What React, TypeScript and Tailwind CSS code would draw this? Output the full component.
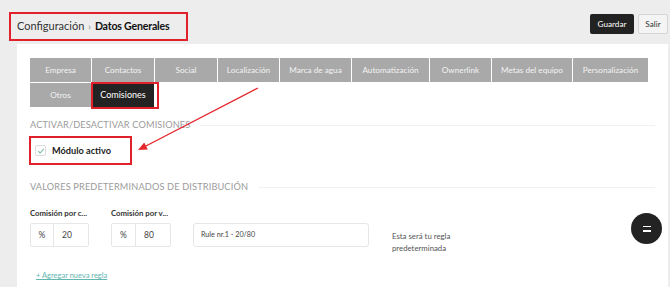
import React from "react";

const tabsRow1: { label: string; w: string }[] = [
  { label: "Empresa", w: "w-[61px]" },
  { label: "Contactos", w: "w-[62px]" },
  { label: "Social", w: "w-[62px]" },
  { label: "Localización", w: "w-[61px]" },
  { label: "Marca de agua", w: "w-[71px]" },
  { label: "Automatización", w: "w-[77px]" },
  { label: "Ownerlink", w: "w-[61px]" },
  { label: "Metas del equipo", w: "w-[80px]" },
  { label: "Personalización", w: "w-[75px]" },
];

function Tab({ label, w, active }: { label: string; w: string; active?: boolean }) {
  return (
    <div
      className={`${w} h-[24px] flex items-center justify-center text-[8.2px] whitespace-nowrap ${
        active ? "bg-[#232323] text-white text-[9px]" : "bg-[#a9a9a9] text-[#f3f3f3]"
      }`}
    >
      {label}
    </div>
  );
}

function SectionHeading({ children }: { children: React.ReactNode }) {
  return (
    <div className="flex items-center gap-[10px] h-[14px] pr-[13px]">
      <span className="text-[9.2px] tracking-[0.15px] text-[#9b9b9b] whitespace-nowrap">{children}</span>
      <div className="flex-1 h-px bg-[#f1f1f1]" />
    </div>
  );
}

export default function App() {
  return (
    <div
      className="relative w-[670px] h-[287px] overflow-hidden bg-[#ededed] flex flex-col"
      style={{ fontFamily: "Lato, 'Noto Sans', sans-serif" }}
    >
      {/* Header */}
      <div className="h-[44px] flex items-center justify-between pl-[9px] pr-[2px] shrink-0">
        <div className="h-[29px] w-[179px] border-2 border-[#e0202a] flex items-center pl-[6px] mt-[9px] whitespace-nowrap">
          <span className="text-[11px] text-[#333]">Configuración</span>
          <span className="text-[9px] text-[#777] mx-[4px]">›</span>
          <span className="text-[10.6px] font-bold text-[#111] tracking-[-0.2px]">Datos Generales</span>
        </div>
        <div className="flex items-center gap-[4px] mt-[4px]">
          <div className="w-[44px] h-[20px] rounded-[2px] bg-[#222] text-white text-[8.2px] flex items-center justify-center">
            Guardar
          </div>
          <div className="w-[30px] h-[20px] rounded-[2px] bg-[#f4f4f4] border border-[#d6d6d6] text-[#333] text-[8.2px] flex items-center justify-center">
            Salir
          </div>
        </div>
      </div>

      {/* Panel */}
      <div className="flex-1 ml-[17px] mr-[2px] bg-white pl-[13px] pt-[14px] flex flex-col">
        <div className="flex flex-wrap gap-px w-[620px]">
          {tabsRow1.map((t) => (
            <Tab key={t.label} label={t.label} w={t.w} />
          ))}
          <Tab label="Otros" w="w-[61px]" />
          <div className="relative">
            <Tab label="Comisiones" w="w-[62px]" active />
            <div className="absolute left-[-1px] top-[-1px] w-[68px] h-[27px] border-2 border-[#e0202a]" />
          </div>
        </div>

        <div className="mt-[11px]">
          <SectionHeading>ACTIVAR/DESACTIVAR COMISIONES</SectionHeading>
        </div>

        <div className="mt-[4px] ml-[-1px] w-[103px] h-[29px] border-2 border-[#e0202a] flex items-center pl-[4px] gap-[6px]">
          <div className="w-[11px] h-[11px] border border-[#dcdcdc] rounded-[2px] flex items-center justify-center">
            <svg width="8" height="8" viewBox="0 0 8 8">
              <path d="M1.2 4.2 L3.1 6 L6.8 1.8" fill="none" stroke="#7fb8b0" strokeWidth="1.1" />
            </svg>
          </div>
          <span className="text-[9.2px] font-bold text-[#222]">Módulo activo</span>
        </div>

        <div className="mt-[15px]">
          <SectionHeading>VALORES PREDETERMINADOS DE DISTRIBUCIÓN</SectionHeading>
        </div>

        <div className="mt-[13px] flex items-start">
          <div className="flex flex-col w-[81px]">
            <span className="h-[12px] leading-[12px] text-[7.8px] font-bold text-[#333] whitespace-nowrap">Comisión por c...</span>
            <div className="mt-[4px] w-[59px] h-[24px] border border-[#e6e6e6] rounded-[2px] flex text-[8.5px] text-[#444]">
              <div className="w-[23px] border-r border-[#e6e6e6] flex items-center justify-center">%</div>
              <div className="flex items-center pl-[8px]">20</div>
            </div>
          </div>
          <div className="flex flex-col w-[82px]">
            <span className="h-[12px] leading-[12px] text-[7.8px] font-bold text-[#333] whitespace-nowrap">Comisión por v...</span>
            <div className="mt-[4px] w-[60px] h-[24px] border border-[#e6e6e6] rounded-[2px] flex text-[8.5px] text-[#444]">
              <div className="w-[24px] border-r border-[#e6e6e6] flex items-center justify-center">%</div>
              <div className="flex items-center pl-[8px]">80</div>
            </div>
          </div>
          <div className="mt-[16px] w-[176px] h-[24px] border border-[#e6e6e6] rounded-[3px] flex items-center pl-[7px] text-[7.2px] text-[#444] whitespace-nowrap">
            Rule nr.1 - 20/80
          </div>
          <div className="mt-[23px] ml-[23px] text-[7.8px] leading-[12px] text-[#555] whitespace-nowrap">
            Esta será tu regla
            <br />
            predeterminada
          </div>
        </div>

        <div className="mt-[12px] ml-[6px] h-[12px] leading-[12px]">
          <span className="text-[7.5px] text-[#62b6b0] underline">+ Agregar nueva regla</span>
        </div>
      </div>

      {/* Floating action button */}
      <div className="absolute left-[631px] top-[213px] w-[31px] h-[31px] rounded-full bg-[#232323] flex flex-col items-center justify-center gap-[3px]">
        <div className="w-[8px] h-[1.5px] bg-white" />
        <div className="w-[8px] h-[1.5px] bg-white" />
      </div>

      {/* Annotation arrow */}
      <svg className="absolute left-0 top-0 pointer-events-none" width="670" height="287">
        <line x1="258" y1="88" x2="143" y2="147.5" stroke="#e5262d" strokeWidth="1.4" />
        <polygon points="138,150 147.8,149.5 144.2,142.4" fill="#e5262d" />
      </svg>
    </div>
  );
}
